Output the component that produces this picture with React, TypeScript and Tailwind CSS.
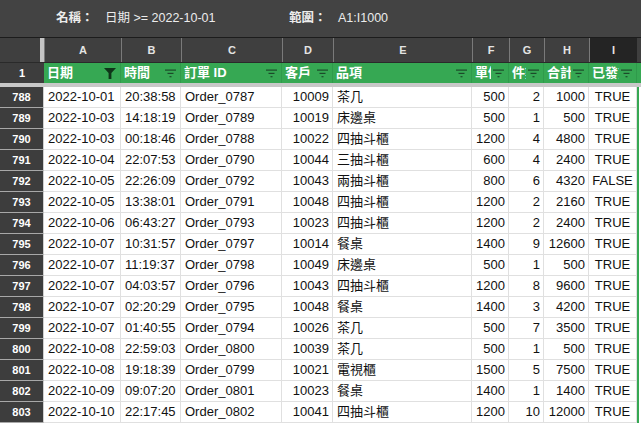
import React from "react";

const FONT = '"Liberation Sans", Arial, "Noto Sans CJK TC", sans-serif';

type Row = [number, string, string, string, string, string, string, string, string, string];

const rows: Row[] = [
  [788, "2022-10-01", "20:38:58", "Order_0787", "10009", "茶几", "500", "2", "1000", "TRUE"],
  [789, "2022-10-03", "14:18:19", "Order_0789", "10019", "床邊桌", "500", "1", "500", "TRUE"],
  [790, "2022-10-03", "00:18:46", "Order_0788", "10022", "四抽斗櫃", "1200", "4", "4800", "TRUE"],
  [791, "2022-10-04", "22:07:53", "Order_0790", "10044", "三抽斗櫃", "600", "4", "2400", "TRUE"],
  [792, "2022-10-05", "22:26:09", "Order_0792", "10043", "兩抽斗櫃", "800", "6", "4320", "FALSE"],
  [793, "2022-10-05", "13:38:01", "Order_0791", "10048", "四抽斗櫃", "1200", "2", "2160", "TRUE"],
  [794, "2022-10-06", "06:43:27", "Order_0793", "10023", "四抽斗櫃", "1200", "2", "2400", "TRUE"],
  [795, "2022-10-07", "10:31:57", "Order_0797", "10014", "餐桌", "1400", "9", "12600", "TRUE"],
  [796, "2022-10-07", "11:19:37", "Order_0798", "10049", "床邊桌", "500", "1", "500", "TRUE"],
  [797, "2022-10-07", "04:03:57", "Order_0796", "10043", "四抽斗櫃", "1200", "8", "9600", "TRUE"],
  [798, "2022-10-07", "02:20:29", "Order_0795", "10048", "餐桌", "1400", "3", "4200", "TRUE"],
  [799, "2022-10-07", "01:40:55", "Order_0794", "10026", "茶几", "500", "7", "3500", "TRUE"],
  [800, "2022-10-08", "22:59:03", "Order_0800", "10039", "茶几", "500", "1", "500", "TRUE"],
  [801, "2022-10-08", "19:18:39", "Order_0799", "10021", "電視櫃", "1500", "5", "7500", "TRUE"],
  [802, "2022-10-09", "09:07:20", "Order_0801", "10023", "餐桌", "1400", "1", "1400", "TRUE"],
  [803, "2022-10-10", "22:17:45", "Order_0802", "10041", "四抽斗櫃", "1200", "10", "12000", "TRUE"],
];

const GRID = "grid grid-cols-[44px_77px_60px_101px_51px_139px_37px_35px_45px_48px_4px]";

const letters = ["A", "B", "C", "D", "E", "F", "G", "H", "I"];
const headers = ["日期", "時間", "訂單 ID", "客戶", "品項", "單價", "件數", "合計", "已發貨"];

function FilterIcon() {
  return (
    <svg width="11" height="9" viewBox="0 0 11 9" className="block">
      <rect x="0" y="0.5" width="11" height="1.2" fill="#1c4a2a" />
      <rect x="2.5" y="3.8" width="6" height="1.2" fill="#1c4a2a" />
      <rect x="4.5" y="7.1" width="2" height="1.2" fill="#1c4a2a" />
    </svg>
  );
}

function FunnelIcon() {
  return (
    <svg width="12" height="11" viewBox="0 0 12 11" className="block">
      <polygon points="0,0 12,0 7.4,5 7.4,11 4.6,11 4.6,5" fill="#0f3519" />
    </svg>
  );
}

export default function App() {
  return (
    <div
      className="w-[641px] h-[424px] overflow-hidden bg-white"
      style={{ fontFamily: FONT }}
    >
      {/* top bar */}
      <div className="h-[38px] bg-[#434343] border-b border-[#1c1c1c] flex items-center text-[12.5px] text-[#ececec]">
        <span className="ml-[56px] font-bold w-[49px]">名稱：</span>
        <span className="w-[184px]">日期 &gt;= 2022-10-01</span>
        <span className="font-bold w-[49px]">範圍：</span>
        <span>A1:I1000</span>
      </div>

      {/* column letters */}
      <div className={`${GRID} h-[25px] bg-[#3f3f3f] border-b border-[#2a2a2a]`}>
        <div className="flex justify-end">
          <div className="w-[4px] h-full bg-[#c4c4c4]" />
        </div>
        {letters.map((l, i) => (
          <div
            key={l}
            className={`flex items-center justify-center text-[11px] font-bold text-[#e4e4e4] border-l border-[#7a7a7a] ${
              i === 8 ? "bg-[#242424]" : ""
            }`}
          >
            {l}
          </div>
        ))}
        <div className="bg-[#3f3f3f]" />
      </div>

      {/* header row 1 */}
      <div className={`${GRID} h-[20px] bg-[#36a853]`}>
        <div className="bg-[#3d3d3d] flex items-center justify-center text-[11px] font-bold text-white">
          1
        </div>
        {headers.map((h, i) => (
          <div
            key={h}
            className="flex items-center min-w-0 border-r border-[#2f9a4b] text-[13px] font-bold text-white"
          >
            <span className="flex-1 min-w-0 overflow-hidden whitespace-nowrap pl-[3px] leading-[20px]">
              {h}
            </span>
            <span className="shrink-0 pl-[2px] pr-[4px] flex items-center">
              {i === 0 ? <FunnelIcon /> : <FilterIcon />}
            </span>
          </div>
        ))}
        <div className="bg-[#36a853]" />
      </div>

      {/* frozen divider */}
      <div className="h-[4px] bg-[#c8c8c8]" />

      {/* data rows */}
      {rows.map((r) => (
        <div key={r[0]} className={`${GRID} h-[21px] text-[13px] text-[#111]`}>
          <div className="bg-[#3d3d3d] border-b border-[#a8a8a8] border-r border-r-[#d0d0d0] flex items-center justify-center text-[11px] font-bold text-white">
            {r[0]}
          </div>
          {r.slice(1).map((v, i) => {
            const right = i === 3 || i === 5 || i === 6 || i === 7;
            const center = i === 8;
            return (
              <div
                key={i}
                className={`flex items-center min-w-0 overflow-hidden whitespace-nowrap border-r border-b border-[#e0e0e0] ${
                  right ? "justify-end pr-[3px]" : center ? "justify-center" : "pl-[4px]"
                }`}
              >
                {v}
              </div>
            );
          })}
          <div className="border-l-2 border-[#36a853] bg-white" />
        </div>
      ))}
    </div>
  );
}
